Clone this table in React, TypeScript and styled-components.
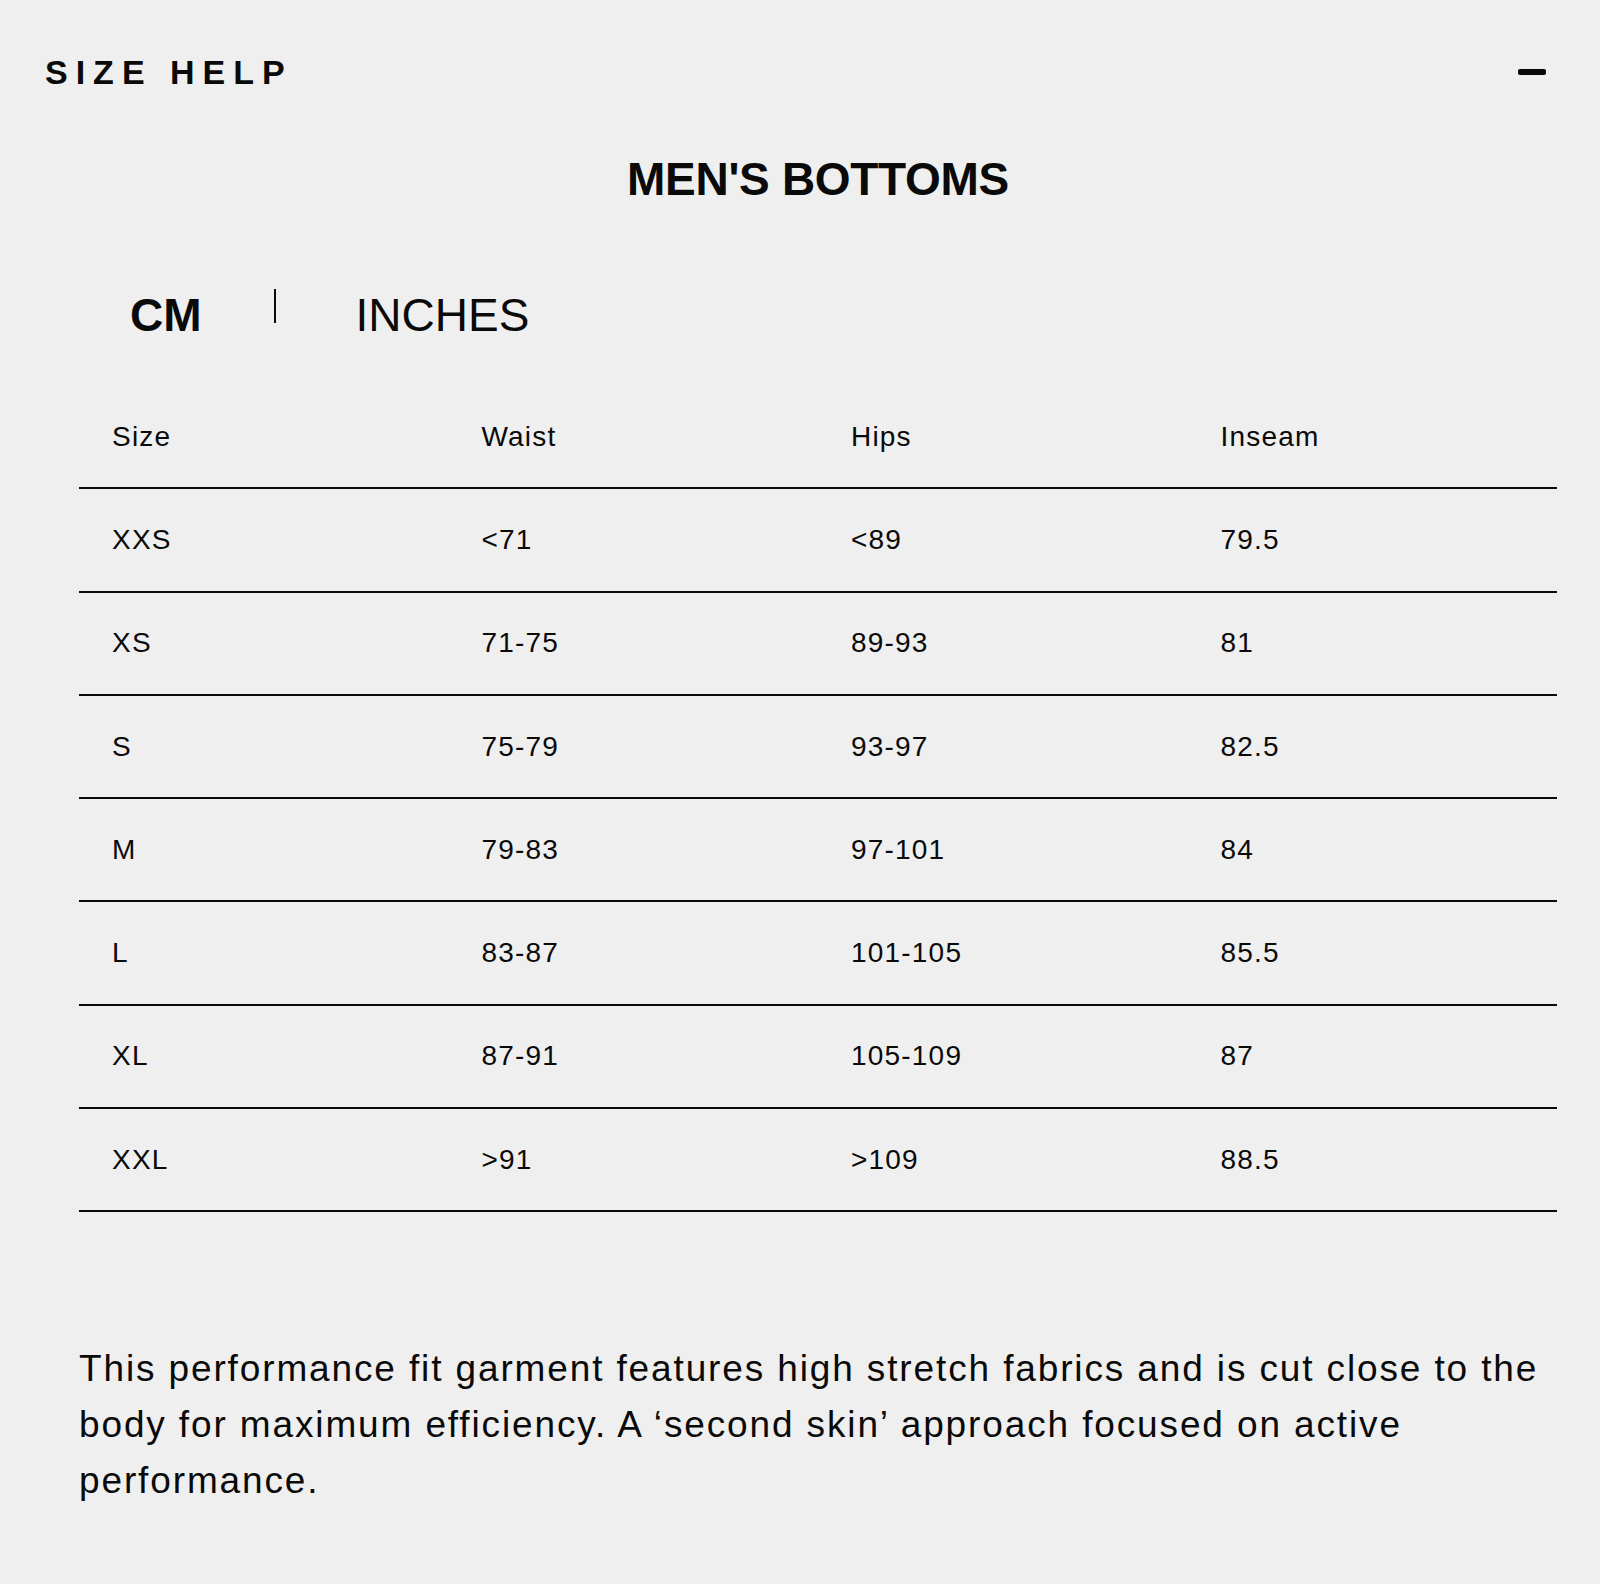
import React, { useState } from "react";
import styled, { createGlobalStyle } from "styled-components";

const GlobalStyle = createGlobalStyle`
  html, body {
    margin: 0;
    padding: 0;
    background: #efefef;
    color: #0a0a0a;
    font-family: "Liberation Sans", Arial, sans-serif;
  }
  * { box-sizing: border-box; }
`;

const Page = styled.div`
  min-height: 1584px;
  background: #efefef;
  display: flex;
  flex-direction: column;
`;

const TopBar = styled.header`
  height: 143px;
  display: flex;
  align-items: center;
  justify-content: space-between;
  padding: 0 54px 0 45px;
`;

const SectionLabel = styled.h2`
  margin: 0;
  font-size: 34px;
  line-height: 1;
  font-weight: 700;
  letter-spacing: 8px;
`;

const CollapseButton = styled.button`
  border: 0;
  background: transparent;
  padding: 0;
  width: 28px;
  height: 34px;
  display: flex;
  align-items: center;
  cursor: pointer;
`;

const MinusBar = styled.span`
  display: block;
  width: 28px;
  height: 6px;
  border-radius: 2px;
  background: #0a0a0a;
`;

const Content = styled.main`
  padding: 0 43px 75px 79px;
  display: flex;
  flex-direction: column;
`;

const Title = styled.h1`
  margin: 13px 0 0;
  text-align: center;
  font-size: 46px;
  line-height: 46px;
  font-weight: 700;
  letter-spacing: -0.3px;
`;

const UnitToggle = styled.div`
  margin-top: 90px;
  padding-left: 51px;
  display: flex;
  align-items: flex-start;
  height: 46px;
`;

const UnitButton = styled.button<{ $active: boolean }>`
  border: 0;
  background: transparent;
  padding: 0;
  color: #0a0a0a;
  font-family: "Liberation Sans", Arial, sans-serif;
  font-size: 46px;
  line-height: 46px;
  font-weight: ${(p) => (p.$active ? 700 : 400)};
  cursor: pointer;
`;

const UnitDivider = styled.span`
  display: block;
  width: 2px;
  height: 34px;
  margin: -3px 80px 0 72px;
  background: #0a0a0a;
`;

const Table = styled.div`
  margin-top: 48px;
  display: flex;
  flex-direction: column;
`;

const Row = styled.div`
  display: grid;
  grid-template-columns: repeat(4, 1fr);
  align-items: center;
  height: 103.3px;
  border-bottom: 2px solid #0a0a0a;
`;

const Cell = styled.div`
  padding-left: 33px;
  font-size: 28px;
  line-height: 28px;
  letter-spacing: 1.2px;
`;

const Description = styled.p`
  margin: 129px 0 0;
  font-size: 37px;
  line-height: 56px;
  letter-spacing: 1.87px;
`;

const headers = ["Size", "Waist", "Hips", "Inseam"];
const rowsCm = [
  ["XXS", "<71", "<89", "79.5"],
  ["XS", "71-75", "89-93", "81"],
  ["S", "75-79", "93-97", "82.5"],
  ["M", "79-83", "97-101", "84"],
  ["L", "83-87", "101-105", "85.5"],
  ["XL", "87-91", "105-109", "87"],
  ["XXL", ">91", ">109", "88.5"],
];

export default function App() {
  const [unit, setUnit] = useState<"cm" | "in">("cm");
  return (
    <Page>
      <GlobalStyle />
      <TopBar>
        <SectionLabel>SIZE HELP</SectionLabel>
        <CollapseButton aria-label="Collapse">
          <MinusBar />
        </CollapseButton>
      </TopBar>
      <Content>
        <Title>MEN'S BOTTOMS</Title>
        <UnitToggle>
          <UnitButton $active={unit === "cm"} onClick={() => setUnit("cm")}>
            CM
          </UnitButton>
          <UnitDivider />
          <UnitButton $active={unit === "in"} onClick={() => setUnit("in")}>
            INCHES
          </UnitButton>
        </UnitToggle>
        <Table>
          <Row>
            {headers.map((h) => (
              <Cell key={h}>{h}</Cell>
            ))}
          </Row>
          {rowsCm.map((r) => (
            <Row key={r[0]}>
              {r.map((c, i) => (
                <Cell key={i}>{c}</Cell>
              ))}
            </Row>
          ))}
        </Table>
        <Description>
          This performance fit garment features high stretch fabrics and is cut close to the
          body for maximum efficiency. A ‘second skin’ approach focused on active performance.
        </Description>
      </Content>
    </Page>
  );
}
